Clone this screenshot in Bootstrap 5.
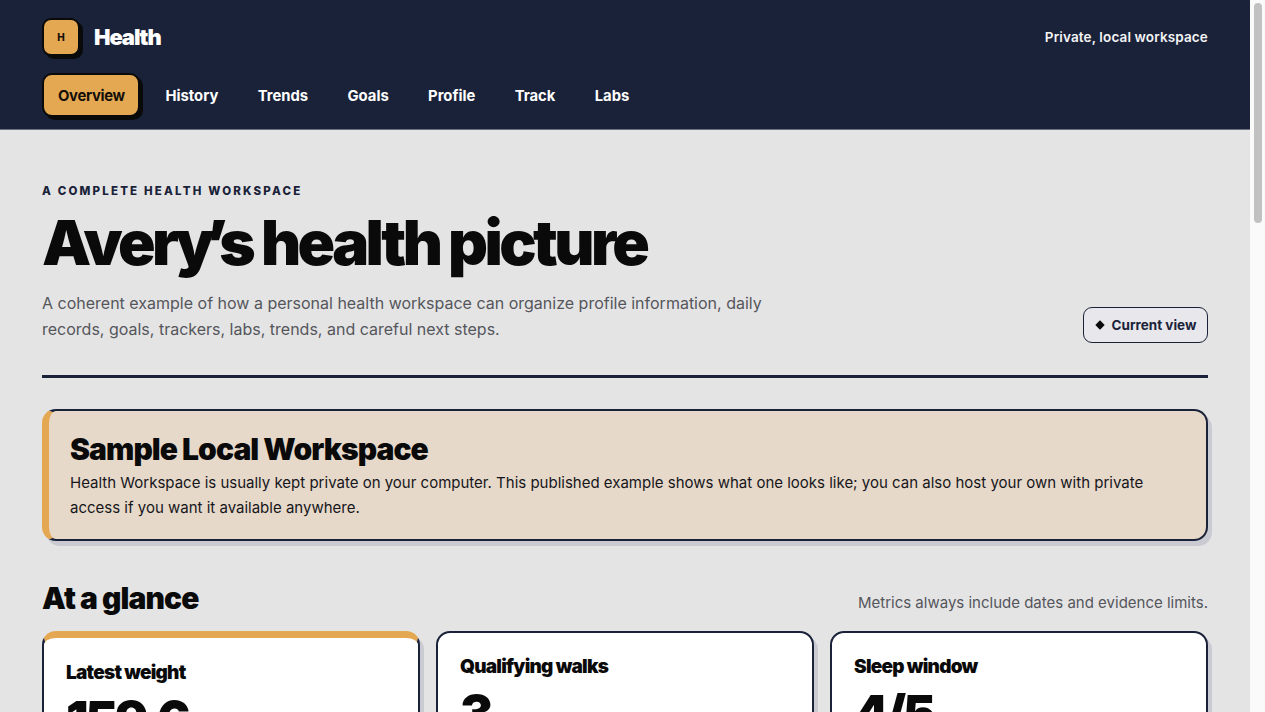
<!DOCTYPE html>
<html lang="en">
<head>
<meta charset="utf-8">
<title>Health</title>
<link href="https://cdn.jsdelivr.net/npm/bootstrap@5.3.0/dist/css/bootstrap.min.css" rel="stylesheet">
<style>
body{font-family:Inter,"Liberation Sans",sans-serif;background:#e4e4e5;color:#0a0a0a;padding-right:15px}
.hw-bar{position:fixed;top:0;right:0;width:15px;height:100vh;background:#fafafa}
.hw-thumb{position:absolute;top:3px;left:4px;width:8px;height:220px;background:#c1c1c1;border-radius:4px}
.hw-top{background:#1a2239;height:130px;border-bottom:1px solid #6d7280;padding:18px 42px 0}
.hw-mark{width:38px;height:38px;background:#e4a853;border:2px solid #0a0a0a;border-radius:9px;box-shadow:3px 3px 0 #0a0a0a;font-size:10px;font-weight:800;color:#1a1208}
.hw-brand{font-size:22px;font-weight:900;letter-spacing:-.05em;color:#fff;line-height:38px;margin-left:2px}
.hw-note{font-size:13.5px;font-weight:600;color:#f4f4f6;letter-spacing:.01em}
.hw-nav{margin-top:17px;gap:4px}
.hw-link{font-size:14.8px;font-weight:700;color:#fff;padding:0 15.7px;height:44px;line-height:42px;border:2px solid transparent;text-decoration:none;border-radius:10px}
.hw-link.hw-on{background:#e4a853;color:#140f08;border-color:#0a0a0a;box-shadow:3px 3px 0 #0a0a0a;padding:0 13px 0 14px;letter-spacing:-.02em;margin-right:4px}
.hw-main{padding:55px 42px 0}
.hw-eyebrow{font-size:11.5px;font-weight:800;letter-spacing:.19em;text-transform:uppercase;color:#1a2239;line-height:13px}
.hw-title{font-size:62px;font-weight:900;letter-spacing:-.058em;line-height:70px;margin:10px 0 12px;color:#0a0a0a}
.hw-kern{letter-spacing:-.14em}
.hw-lede{font-size:16px;line-height:26px;color:#55565b;max-width:760px;margin:0}
.hw-chip{font-size:13.5px;font-weight:700;color:#1a2239;border:1.5px solid #1a2239;border-radius:9px;height:36px;width:125px;gap:7px;background:#e8e8ec;margin-bottom:-1px}
.hw-dot{width:10px;height:10px}
.hw-rule{height:3px;background:#1a2239;margin:33px 0 31px}
.hw-callout{background:#e6d9ca;border:2px solid #1a2239;border-left:7px solid #e4a853;border-radius:14px;box-shadow:4px 5px 0 #c9cad2;padding:20px 20px 19px 21px;height:132px}
.hw-callout h2{font-size:30px;font-weight:900;letter-spacing:-.031em;line-height:36px;margin:0 0 3px}
.hw-callout p{font-size:15px;line-height:25px;margin:0;color:#16161a}
.hw-sec{margin-top:37px;margin-bottom:13px}
.hw-sec h2{font-size:30px;font-weight:900;letter-spacing:-.031em;margin:0;line-height:40px}
.hw-sec span{font-size:15px;color:#55565b;padding-top:11px}
.hw-cards{display:grid;grid-template-columns:repeat(3,1fr);gap:16px}
.hw-card{background:#fff;border:2px solid #1a2239;border-radius:14px;box-shadow:4px 5px 0 #c9cad2;padding:21px 22px;min-height:160px}
.hw-card.hw-lead{border-top:7px solid #e4a853;padding-top:22px}
.hw-card h3{font-size:19px;font-weight:900;letter-spacing:-.04em;margin:0;line-height:26px}
.hw-val{font-size:50px;font-weight:900;letter-spacing:-.07em;line-height:60px;margin-top:3px}
</style>
</head>
<body>
<header class="hw-top">
  <div class="d-flex justify-content-between align-items-center">
    <div class="d-flex align-items-center gap-2">
      <div class="hw-mark d-flex align-items-center justify-content-center me-1">H</div>
      <div class="hw-brand">Health</div>
    </div>
    <div class="hw-note">Private, local workspace</div>
  </div>
  <nav class="d-flex hw-nav">
    <a class="hw-link hw-on" href="#">Overview</a>
    <a class="hw-link" href="#">History</a>
    <a class="hw-link" href="#">Trends</a>
    <a class="hw-link" href="#">Goals</a>
    <a class="hw-link" href="#">Profile</a>
    <a class="hw-link" href="#">Track</a>
    <a class="hw-link" href="#">Labs</a>
  </nav>
</header>
<main class="hw-main">
  <div class="hw-eyebrow">A complete health workspace</div>
  <div class="d-flex justify-content-between align-items-end">
    <div>
      <h1 class="hw-title">Aver<span class="hw-kern">y’</span>s health picture</h1>
      <p class="hw-lede">A coherent example of how a personal health workspace can organize profile information, daily records, goals, trackers, labs, trends, and careful next steps.</p>
    </div>
    <div class="hw-chip d-flex align-items-center justify-content-center"><svg class="hw-dot" viewBox="0 0 10 10"><path d="M5 0.3 9.7 5 5 9.7 0.3 5Z" fill="#0a0a0a"/></svg><span>Current view</span></div>
  </div>
  <div class="hw-rule"></div>
  <section class="hw-callout">
    <h2>Sample Local Workspace</h2>
    <p>Health Workspace is usually kept private on your computer. This published example shows what one looks like; you can also host your own with private access if you want it available anywhere.</p>
  </section>
  <div class="hw-sec d-flex justify-content-between align-items-center">
    <h2>At a glance</h2>
    <span>Metrics always include dates and evidence limits.</span>
  </div>
  <div class="hw-cards">
    <div class="hw-card hw-lead"><h3>Latest weight</h3><div class="hw-val">159.6</div></div>
    <div class="hw-card"><h3>Qualifying walks</h3><div class="hw-val">3</div></div>
    <div class="hw-card"><h3>Sleep window</h3><div class="hw-val">4/5</div></div>
  </div>
</main>
<div class="hw-bar" aria-hidden="true"><div class="hw-thumb"></div></div>
<script src="https://cdn.jsdelivr.net/npm/bootstrap@5.3.0/dist/js/bootstrap.bundle.min.js"></script>
</body>
</html>
